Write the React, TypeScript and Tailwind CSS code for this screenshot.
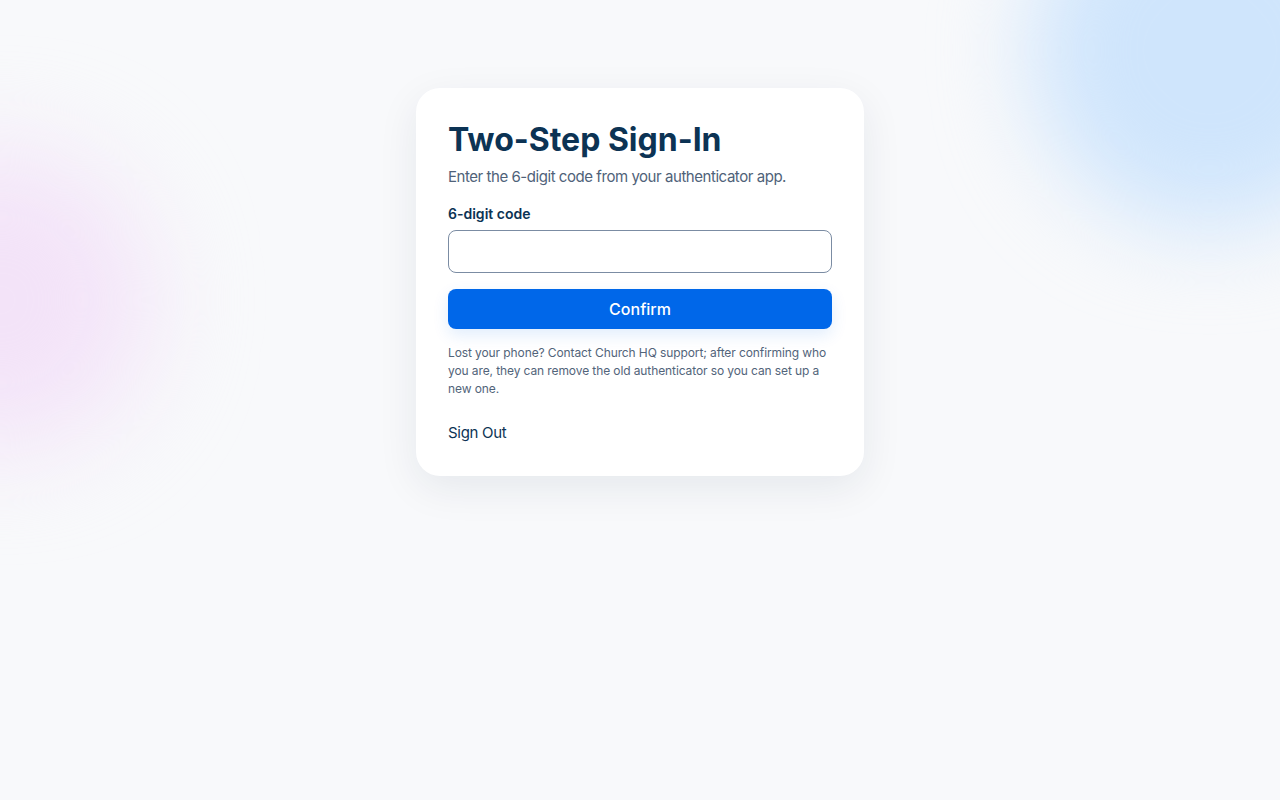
export default function App() {
  return (
    <div
      className="relative min-h-[800px] w-full overflow-hidden bg-[#f8f9fb]"
      style={{ fontFamily: 'Inter, "Noto Sans", sans-serif' }}
    >
      {/* soft background blobs */}
      <div className="pointer-events-none absolute -right-[110px] -top-[130px] h-[360px] w-[360px] rounded-full bg-[#cfe5fc] blur-[45px]" />
      <div className="pointer-events-none absolute -left-[150px] top-[150px] h-[300px] w-[300px] rounded-full bg-[#f3e3f8] blur-[50px]" />

      <div className="relative flex justify-center pt-[88px]">
        <div className="w-[448px] rounded-[24px] bg-white px-8 pb-8 pt-8 shadow-[0_12px_40px_rgba(15,35,70,0.08)]">
          <h1 className="text-[32px] font-bold leading-[40px] tracking-[0px] text-[#0c3354]">
            Two-Step Sign-In
          </h1>
          <p className="mt-[6px] text-[15px] leading-[22px] tracking-[-0.45px] text-[#4f6279]">
            Enter the 6-digit code from your authenticator app.
          </p>

          <label className="mt-4 block text-[14px] font-semibold leading-[20px] text-[#0c3354]">
            6-digit code
          </label>
          <input
            type="text"
            inputMode="numeric"
            className="mt-[6px] block h-[43px] w-full rounded-lg border border-[#7b8ca3] bg-white px-3 text-[15px] text-[#0c3354] outline-none"
          />

          <button className="mt-4 flex h-10 w-full items-center justify-center rounded-lg bg-[#0067e9] text-[16px] font-medium text-white shadow-[0_6px_16px_rgba(0,103,233,0.12)]">
            Confirm
          </button>

          <p className="mt-[15px] text-[12px] leading-[18px] tracking-[-0.1px] text-[#52647a]">
            Lost your phone? Contact Church HQ support; after confirming who you are, they can remove the old
            authenticator so you can set up a new one.
          </p>

          <button className="mt-6 block text-[15px] leading-[22px] tracking-[-0.3px] text-[#0c3354]">
            Sign Out
          </button>
        </div>
      </div>
    </div>
  );
}
